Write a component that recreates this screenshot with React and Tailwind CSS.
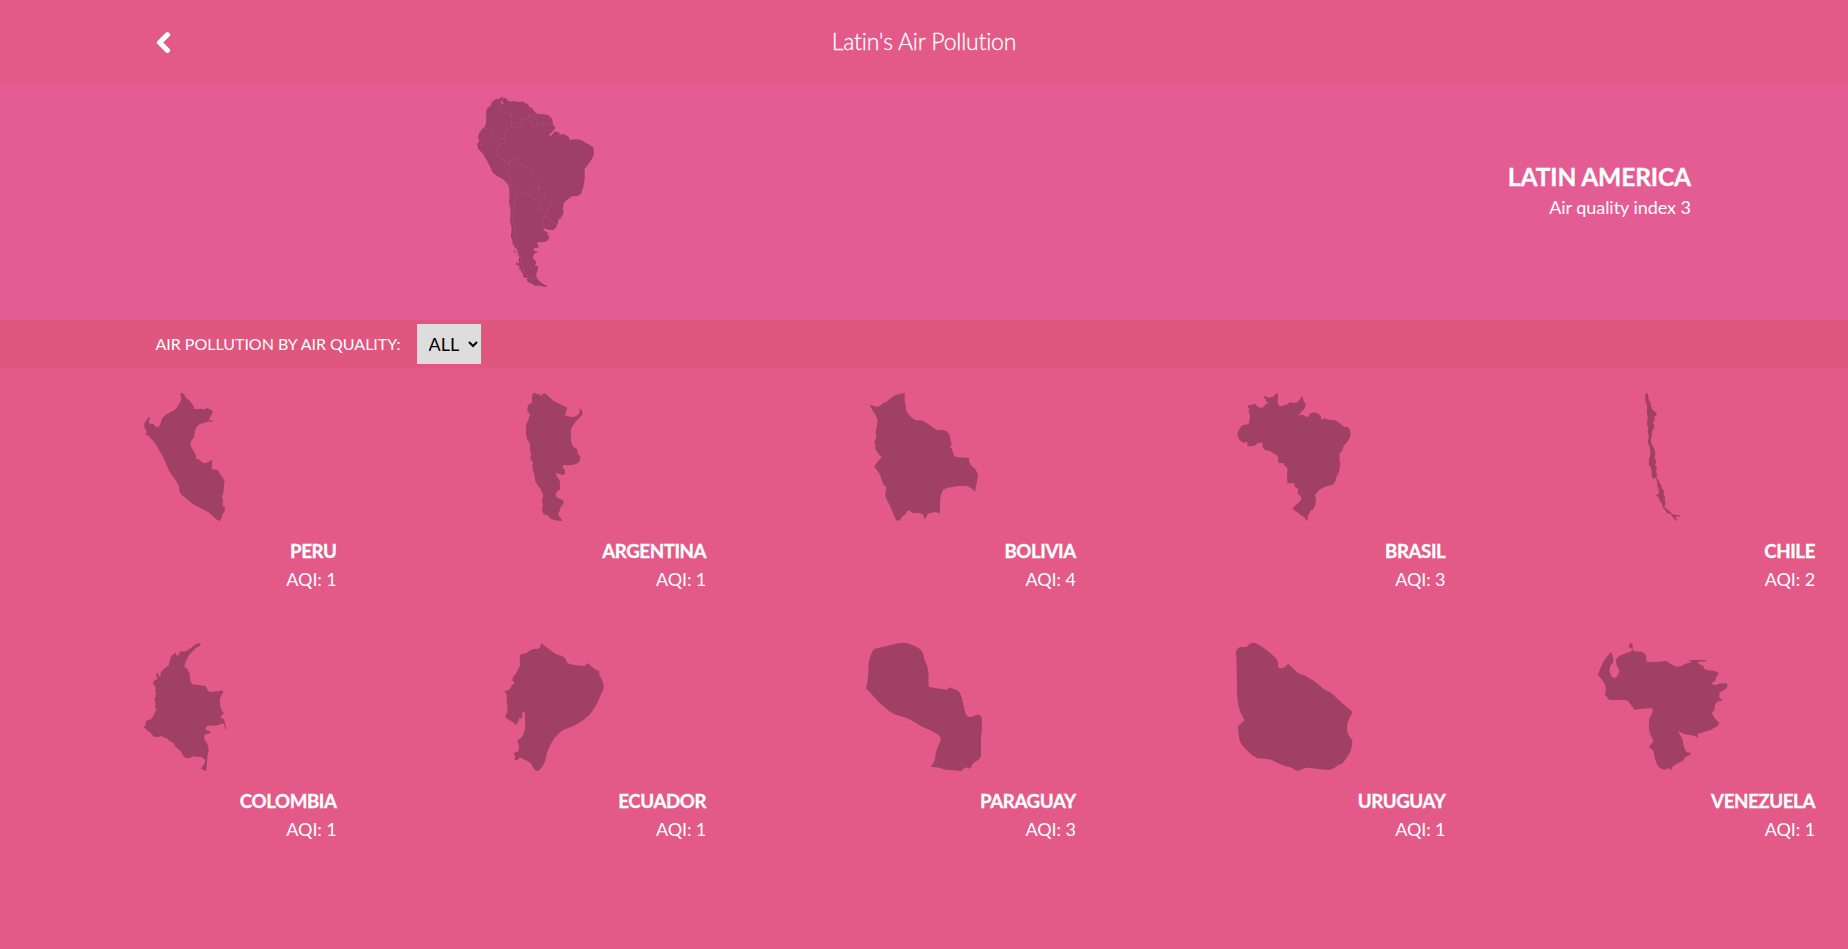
import React from "react";
import { FaChevronLeft } from "react-icons/fa";

const countries = [
  {
    name: "PERU", aqi: 1, viewBox: "-60.6 0 450 450",
    d: "M150 40L157 39L163 46L168 54L178 62L184 70L190 78L191 87L202 88L216 86L223 89L230 84L238 87L247 93L246 101L240 111L236 119L248 122L247 126L237 124L225 128L210 131L199 141L194 153L192 171L184 180L180 195L187 208L197 225L198 236L209 239L214 247L225 250L235 246L243 239L246 243L245 268L262 270L268 279L276 291L283 302L281 323L279 342L275 350L279 361L277 376L285 384L282 396L277 403L274 414L268 423L260 419L249 409L238 399L219 388L200 379L183 368L166 354L154 344L148 335L147 320L139 306L128 289L118 275L108 252L100 234L88 212L77 193L66 180L55 167L45 164L51 157L43 144L42 132L47 122L56 110L60 114L55 124L59 132L69 131L76 140L84 141L90 134L95 116L105 106L120 97L132 91L142 80L149 69L154 57Z",
  },
  {
    name: "ARGENTINA", aqi: 1, viewBox: "-91.8 0 450 450",
    d: "M69 41L77 39L83 43L90 43L95 49L98 43L105 40L112 44L121 53L133 64L148 71L163 78L174 84L170 92L167 107L187 111L199 109L207 102L211 97L209 89L214 86L219 95L218 105L209 113L199 124L190 137L184 148L184 181L188 196L194 203L202 207L205 222L212 229L211 240L205 249L193 254L176 256L161 255L159 261L166 270L166 282L158 285L145 280L138 280L143 291L150 300L152 328L143 334L138 343L142 353L153 357L162 362L160 373L153 382L150 393L145 403L150 411L159 422L145 422L125 418L118 410L110 404L103 403L97 393L98 383L100 375L97 363L101 347L94 328L84 316L77 303L74 282L70 270L68 256L71 248L61 234L65 223L61 209L61 190L53 179L49 161L50 132L56 120L61 103L53 93L55 75L67 68L67 54Z",
  },
  {
    name: "BOLIVIA", aqi: 4, viewBox: "-33 0 450 450",
    d: "M30 75L41 77L51 81L61 77L69 69L77 67L90 56L102 48L117 42L134 39L134 68L138 77L137 89L144 101L154 112L166 121L181 121L191 124L203 131L218 142L232 151L249 150L260 154L268 163L271 179L276 194L269 199L275 206L279 218L283 229L293 232L328 234L327 243L333 256L348 270L354 287L351 304L345 335L334 325L322 318L302 317L280 320L261 324L249 330L242 347L240 363L240 400L225 396L203 401L196 418L188 403L176 398L160 400L145 390L136 402L125 412L119 422L109 421L101 405L94 386L83 364L75 347L79 322L70 312L65 299L59 282L50 269L43 259L54 244L65 231L57 224L48 211L45 204L47 194L43 187L49 171L47 157L51 137L53 120L47 105L37 91Z",
  },
  {
    name: "BRASIL", aqi: 3, viewBox: "-19.2 0 450 450",
    d: "M155 39L158 47L157 58L157 72L165 79L177 76L188 72L192 67L208 69L216 66L225 56L228 48L231 51L236 67L242 73L236 88L227 95L219 109L227 104L235 106L242 110L249 110L253 102L263 97L276 100L287 108L287 121L297 115L311 119L330 121L342 129L356 140L369 142L375 153L374 171L365 187L355 197L351 212L343 219L342 239L345 249L341 276L333 291L330 303L322 315L308 317L292 323L278 333L268 346L272 355L270 374L262 391L257 389L252 400L248 405L246 421L241 421L239 413L226 405L215 396L201 386L210 376L222 367L228 357L226 347L217 341L218 326L208 320L207 310L186 310L185 294L186 264L178 258L173 249L159 249L157 228L147 221L133 213L119 210L112 202L111 188L100 188L85 198L67 199L65 185L55 189L42 180L36 166L38 154L44 144L52 135L70 133L74 113L72 98L68 92L75 87L68 84L69 75L79 75L83 72L90 72L94 78L105 84L115 81L118 75L131 67L122 66L121 58L116 54L116 49L131 53L144 50L149 43Z",
  },
  {
    name: "CHILE", aqi: 2, viewBox: "-125.4 0 450 450",
    d: "M50 39L53 40L55 49L57 59L62 68L65 83L71 93L80 97L80 105L73 110L75 120L69 128L74 137L70 149L67 153L66 166L63 178L64 189L70 200L73 207L77 218L74 234L80 244L76 254L81 263L79 276L82 285L80 294L86 300L89 309L95 316L96 326L103 332L101 343L106 352L104 360L107 366L106 374L103 380L111 388L118 392L124 400L131 404L151 406L147 410L140 409L137 414L143 420L139 422L129 412L122 401L112 400L105 389L99 382L96 370L89 361L86 351L77 346L86 343L88 331L83 319L82 307L78 293L69 296L65 286L66 275L62 260L57 254L58 237L62 221L60 201L54 187L57 169L54 155L55 142L51 133L54 114L51 97L52 75L47 65L46 47Z",
  },
  {
    name: "COLOMBIA", aqi: 1, viewBox: "-60.6 0 450 450",
    d: "M199 41L208 39L212 44L207 49L197 53L188 64L179 72L172 83L166 96L162 112L171 115L175 126L179 132L180 153L187 163L209 166L226 168L231 178L238 186L262 184L277 181L279 187L272 199L269 207L270 227L274 240L281 249L275 255L270 263L281 268L285 281L288 298L285 298L282 282L273 281L263 286L229 288L226 300L238 303L242 310L228 312L222 317L223 329L231 341L236 358L232 378L228 423L212 416L223 401L225 389L213 380L199 381L191 378L181 384L167 384L159 377L152 364L144 358L134 347L130 339L119 334L110 325L101 323L95 317L86 321L71 320L62 310L51 301L40 291L47 286L46 278L51 271L63 268L70 256L79 240L74 233L76 221L73 207L77 197L75 181L77 173L68 159L73 151L82 148L77 130L81 129L90 143L92 126L105 113L116 106L119 90L126 74L137 68L139 77L145 75L149 65L167 64L179 56L191 47Z",
  },
  {
    name: "ECUADOR", aqi: 1, viewBox: "-46.8 0 450 450",
    d: "M141 39L150 48L162 56L175 67L188 74L203 78L212 86L219 100L238 105L271 109L276 99L285 104L300 117L316 125L313 132L321 146L327 164L327 178L319 193L312 211L301 232L285 254L266 270L248 282L229 291L207 299L193 310L179 325L167 345L157 368L152 393L145 408L132 423L124 422L117 415L109 400L98 393L86 387L76 382L68 390L60 390L62 380L57 370L71 364L74 351L68 331L81 323L88 309L92 292L91 266L91 245L84 247L82 267L75 263L70 275L64 285L55 276L42 269L32 261L38 246L39 227L36 214L37 196L30 184L44 179L53 165L61 159L54 153L54 143L65 129L76 109L76 91L75 75L85 71L96 70L104 62L116 57L128 57L135 54Z",
  },
  {
    name: "PARAGUAY", aqi: 3, viewBox: "-18 0 450 450",
    d: "M55 60Q59 56 68 54L88 50L109 44L133 39Q151 37 165 42L184 50Q200 58 204 70L209 91L217 109L220 126L221 170L240 174L275 179L284 172L293 176Q310 180 315 190L321 207L328 236Q332 258 341 261L351 260L370 253L380 260L381 300L378 319L378 378Q374 389 361 395L352 403L346 416L331 412L319 423L296 421L273 419L246 412L228 411L239 391L242 369L252 343L258 327Q255 316 241 309L226 301L201 290L178 276L154 263L132 257Q113 252 102 243L74 219L52 195L33 175L38 151L40 122L41 98Q44 78 55 60Z",
  },
  {
    name: "URUGUAY", aqi: 1, viewBox: "-19.2 0 450 450",
    d: "M31 70Q34 55 44 51L63 51Q71 41 79 39Q89 36 98 43L118 56L139 73L153 86Q158 92 158 110Q163 116 172 114Q180 112 188 101L201 114L222 132Q239 135 248 142L270 156L299 180Q314 184 321 192L350 219L381 246Q378 256 371 266L366 280L365 301L369 315L381 331Q381 351 374 367L361 388L350 401L337 406Q323 419 309 420L280 417L247 413Q233 414 225 421Q214 425 206 418L193 411L179 408L157 399L137 389L120 386L96 385Q86 380 77 373L60 356Q46 343 43 331L38 304L39 287L57 271L47 251L39 229L35 198L34 110L33 84Z",
  },
  {
    name: "VENEZUELA", aqi: 1, viewBox: "-5.4 0 450 450",
    d: "M120 40L126 39L129 47L128 58L133 64L155 65Q165 68 169 78L170 95L190 97L230 93L242 102L260 110L274 109L287 101L306 97L295 91L350 90L349 94L325 95L328 103L340 107L343 116L353 121L373 122L387 130L378 143L376 154L363 160L376 166L387 161L410 160L414 167L407 178L390 187L388 202L399 211L382 215L375 226L374 241L366 249L374 264L388 279L383 288L361 301L338 307L324 311L323 325L316 318L300 315L284 312L264 303L274 320L279 331L282 351L290 367L305 369L299 376L286 382L281 391L260 402L248 410L244 422L240 414L223 419L209 413L200 400L195 384L191 362L177 350L192 334L181 313L177 294L178 268L190 242L186 234L160 236L133 239L124 225L112 211L58 209L45 193L49 178L45 161L35 147L24 134L34 110L44 89L55 76L63 65L69 77L71 95L61 109L59 125L67 142L77 144L86 133L89 121L80 105L78 88L88 78L102 72L120 66L128 61L124 53L117 53Z",
  },
];

const borders = [
  "M128 46L118 49L117 64L120 77L130 83L147 84L154 88L155 103L154 122L164 130L178 128L187 116L184 103L194 104L206 98L214 93",
  "M154 122L145 124L139 126L138 145L133 159L138 170L134 176L121 175L112 186L108 200L112 215L122 222L133 226L135 233L147 235L150 228L166 222L172 221L175 233L190 242L203 248L213 257L216 269L229 280L237 289L239 304L236 312L238 324L253 330L256 343L268 350L272 365L264 375L252 397L248 416L250 434",
  "M72 130L82 134L94 141L96 153L81 166L71 178L61 180L62 188M94 141L111 152L121 160L133 160",
  "M147 235L148 254L144 268L151 279L148 293L154 306L163 327L168 332L174 326L185 329L193 324L203 325L201 316L210 306L227 304L238 310",
  "M203 325L214 337L232 347L243 352L240 373L257 375L268 367",
  "M168 332L162 350L164 370L159 385L160 411L166 429L165 453L171 475L173 493L181 519L187 535L193 560L204 575L224 583",
  "M252 397L272 405L289 418",
  "M203 75L204 91L214 98L212 112L222 126L233 121L232 106L226 98L232 86M233 121L248 119L253 108L250 91M248 119L263 119L268 108L266 92",
];

function SouthAmerica() {
  return (
    <svg className="block h-[210px] w-[150px]" viewBox="0 0 450 630" aria-hidden="true">
      <path
        fill="#9e3f69"
        fillRule="evenodd"
        d="M121 39L131 33L127 41L137 38L144 47L153 50L163 48L173 51L189 49L194 54L204 57L207 65L217 69L222 78L232 87L252 88L267 91L277 103L279 120L287 128L279 138L267 150L271 154L280 145L284 139L299 143L298 151L306 147L318 150L327 157L329 165L347 163L364 165L376 173L389 179L400 187L402 207L396 221L386 236L374 251L374 281L370 307L363 327L353 333L336 334L321 345L311 354L309 370L311 385L304 396L299 404L296 400L294 413L287 430L278 436L264 434L254 430L251 435L264 443L262 450L269 454L264 466L253 471L233 472L231 477L237 483L234 489L223 489L220 496L225 499L233 500L231 504L222 506L218 520L226 527L230 533L224 541L234 544L233 558L228 568L231 579L237 587L246 595L263 604L253 606L240 602L223 602L217 596L205 592L199 584L205 580L195 578L188 574L190 568L184 562L182 554L176 552L180 545L170 540L167 532L178 535L175 524L178 517L173 506L171 491L164 489L162 480L157 477L157 462L152 458L155 431L150 407L152 373L147 354L149 326L146 304L140 293L128 282L111 273L97 262L92 248L80 226L69 206L54 191L51 176L58 169L54 158L57 145L62 139L66 131L74 126L78 113L79 74L83 68L92 63L95 52L106 43L116 42ZM124 47L125 59L130 56L127 48Z M162 491L167 504L162 503Z"
      />
      <g fill="none" stroke="#b04676" strokeWidth="2.4" strokeLinejoin="round">
        {borders.map((d) => <path key={d} d={d} />)}
      </g>
    </svg>
  );
}

function CountryCard({ name, aqi, viewBox, d }) {
  return (
    <li className="flex h-[250px] flex-col pt-[13px]">
      <svg className="mx-auto block size-[150px] shrink-0" viewBox={viewBox} aria-hidden="true">
        <path d={d} fill="#a04062" />
      </svg>
      <div className="pt-[7px] pr-[33px] text-right">
        <h2 className="text-[18.7px] leading-7 font-bold tracking-[-0.4px] [-webkit-text-stroke:0.3px_white]">{name}</h2>
        <p className="text-[18px] leading-7 tracking-[-0.1px]">AQI: {aqi}</p>
      </div>
    </li>
  );
}

export default function App() {
  return (
    <div className="min-h-screen overflow-hidden bg-[#e35987] font-['Lato',sans-serif] text-white">
      <header className="grid h-[84px] grid-cols-[1fr_auto_1fr] items-center px-[152px]">
        <button type="button" aria-label="Back" className="justify-self-start">
          <FaChevronLeft className="size-[23px] overflow-visible stroke-white [stroke-width:36]" />
        </button>
        <h1 className="pb-[3px] text-[23px] leading-8 font-light tracking-[-0.2px] [-webkit-text-stroke:0.3px_white]">Latin's Air Pollution</h1>
      </header>
      <section className="flex h-[236px] bg-[#e45c94] pr-[157px] pl-[460px]">
        <div className="pt-px">
          <SouthAmerica />
        </div>
        <div className="ml-auto pt-[78px] text-right">
          <h2 className="text-[24.5px] leading-[30px] font-bold tracking-[-0.1px] [-webkit-text-stroke:0.3px_white]">LATIN AMERICA</h2>
          <p className="pt-px text-[18px] leading-7 tracking-[-0.04px]">Air quality index 3</p>
        </div>
      </section>
      <div className="flex h-12 items-center gap-4 bg-[#df567f] pl-[155.5px]">
        <label htmlFor="quality" className="text-[16px] tracking-[-0.02px]">AIR POLLUTION BY AIR QUALITY:</label>
        <select id="quality" className="h-10 w-16 bg-[#dddddd] pl-2 text-[18px] text-black">
          <option>ALL</option>
          <option>1</option>
          <option>2</option>
          <option>3</option>
          <option>4</option>
        </select>
      </div>
      <ul className="-mt-px grid grid-cols-5">
        {countries.map((country) => <CountryCard key={country.name} {...country} />)}
      </ul>
    </div>
  );
}
